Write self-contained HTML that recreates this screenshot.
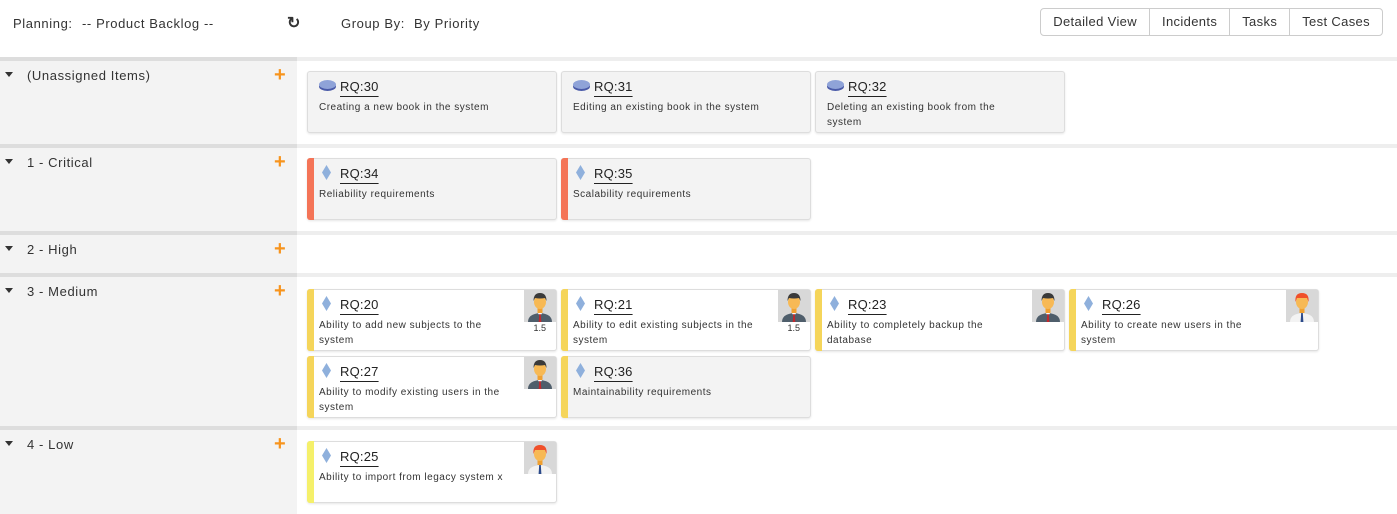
<!DOCTYPE html>
<html><head><style>
*{box-sizing:border-box;margin:0;padding:0}
body{width:1397px;height:514px;overflow:hidden;background:#fff;font-family:"Liberation Sans",sans-serif;color:#333;position:relative;letter-spacing:0.6px}
.top{position:absolute;top:0;left:0;width:1397px;height:57px}
.t{position:absolute;top:16px;font-size:13px}
.btns{position:absolute;right:14px;top:8px;height:28px;border:1px solid #ccc;border-radius:4px;display:flex;font-size:13px;letter-spacing:0.35px}
.btns div{padding:0 12px;line-height:26px;border-right:1px solid #ccc}
.btns div:last-child{border-right:0}
.sep{position:absolute;left:0;width:1397px;height:4px;background:#eee}
.sep:before{content:"";position:absolute;left:0;top:0;width:297px;height:4px;background:#ddd}
.row{position:absolute;left:0;width:1397px}
.lab{position:absolute;left:0;top:0;width:297px;height:100%;background:#f3f3f3}
.lab span{position:absolute;left:27px;top:7px;font-size:13px}
.lab i{position:absolute;left:5px;top:11px;border-left:4px solid transparent;border-right:4px solid transparent;border-top:5px solid #333}
.lab b{position:absolute;left:274px;top:6px;font-size:20px;color:#f7941d;font-weight:bold;line-height:16px;letter-spacing:0}
.card{position:absolute;width:250px;height:62px;border:1px solid #ddd;border-radius:3px;background:#f3f3f3;box-shadow:0 1px 2px rgba(0,0,0,.1)}
.card.w{background:#fff}
.card .bar{position:absolute;left:-1px;top:-1px;bottom:-1px;width:7px;border-radius:3px 0 0 3px}
.card .id{position:absolute;left:32px;top:7px;font-size:13px;letter-spacing:0.2px;text-decoration:underline;text-underline-offset:5px;color:#222}
.card .d{position:absolute;left:11px;top:28px;width:195px;font-size:10px;line-height:15px;color:#333;letter-spacing:0.5px}
.card.w .d{width:190px}
.dia{position:absolute;left:14px;top:6px;width:9px;height:15px}
.disk{position:absolute;left:11px;top:8px;width:17px;height:11px}
.av{position:absolute;right:0;top:0;width:32px;height:32px;background:#ddd;overflow:hidden}
.pts{position:absolute;right:10px;top:33px;font-size:9px;letter-spacing:0}
</style></head><body>
<div class="top">
<div class="t" style="left:13px">Planning:</div>
<div class="t" style="left:82px">-- Product Backlog --</div>
<div class="t" style="left:287px;font-size:16px;top:13px;font-weight:bold">&#x21bb;</div>
<div class="t" style="left:341px">Group By:</div>
<div class="t" style="left:414px">By Priority</div>
<div class="btns"><div>Detailed View</div><div>Incidents</div><div>Tasks</div><div>Test Cases</div></div>
</div>

<div class="sep" style="top:57px"></div>
<div class="row" style="top:61px;height:83px"><div class="lab"><i></i><span>(Unassigned Items)</span><b>+</b></div></div>
<div class="sep" style="top:144px"></div>
<div class="row" style="top:148px;height:83px"><div class="lab"><i></i><span>1 - Critical</span><b>+</b></div></div>
<div class="sep" style="top:231px"></div>
<div class="row" style="top:235px;height:38px"><div class="lab"><i></i><span>2 - High</span><b>+</b></div></div>
<div class="sep" style="top:273px"></div>
<div class="row" style="top:277px;height:149px"><div class="lab"><i></i><span>3 - Medium</span><b>+</b></div></div>
<div class="sep" style="top:426px"></div>
<div class="row" style="top:430px;height:84px"><div class="lab"><i></i><span>4 - Low</span><b>+</b></div></div>

<svg width="0" height="0" style="position:absolute"><defs>
<symbol id="dm" viewBox="0 0 9 15"><path d="M4.5 0L9 7.5 4.5 15 0 7.5z" fill="#8fb0dc"/></symbol>
<symbol id="dk" viewBox="0 0 17 11"><ellipse cx="8.5" cy="6.5" rx="8.5" ry="4.5" fill="#4a5aa8"/><ellipse cx="8.5" cy="4.5" rx="8.5" ry="4.5" fill="#8fa3d8"/></symbol>
<symbol id="m" viewBox="0 0 32 32"><rect width="32" height="32" fill="#d8d8d8"/><path d="M4 32q0-8 12-9 12 1 12 9z" fill="#4f5e6b"/><path d="M13 22h6l-3 4z" fill="#fff"/><path d="M15.3 24h1.4l.6 8h-2.6z" fill="#c0282d"/><rect x="13.5" y="17" width="5" height="6" fill="#f0a030"/><ellipse cx="16" cy="12" rx="6" ry="7" fill="#f7b955"/><path d="M9.5 11q0-8 6.5-8 6.5 0 6.5 8l-1.5-3q-5 1-10 0z" fill="#3a3a3a"/></symbol>
<symbol id="f" viewBox="0 0 32 32"><rect width="32" height="32" fill="#d8d8d8"/><path d="M4 32q0-8 12-9 12 1 12 9z" fill="#f3f3f3"/><path d="M15.2 23h1.6l.6 9h-2.8z" fill="#2c4a8a"/><rect x="13.5" y="17" width="5" height="6" fill="#f0a030"/><ellipse cx="16" cy="12" rx="6" ry="7" fill="#f7b955"/><path d="M9.5 12q-1-9 6.5-9 7.5 0 6.5 9l-1.5-4q-5 0-10 0z" fill="#f0502a"/></symbol>
</defs></svg>

<div class="card" style="left:307px;top:71px"><svg class="disk"><use href="#dk"/></svg><div class="id">RQ:30</div><div class="d">Creating a new book in the system</div></div>
<div class="card" style="left:561px;top:71px"><svg class="disk"><use href="#dk"/></svg><div class="id">RQ:31</div><div class="d">Editing an existing book in the system</div></div>
<div class="card" style="left:815px;top:71px"><svg class="disk"><use href="#dk"/></svg><div class="id">RQ:32</div><div class="d" style="width:185px">Deleting an existing book from the system</div></div>

<div class="card" style="left:307px;top:158px"><div class="bar" style="background:#f47457"></div><svg class="dia"><use href="#dm"/></svg><div class="id">RQ:34</div><div class="d">Reliability requirements</div></div>
<div class="card" style="left:561px;top:158px"><div class="bar" style="background:#f47457"></div><svg class="dia"><use href="#dm"/></svg><div class="id">RQ:35</div><div class="d">Scalability requirements</div></div>

<div class="card w" style="left:307px;top:289px"><div class="bar" style="background:#f5d55a"></div><svg class="dia"><use href="#dm"/></svg><div class="id">RQ:20</div><div class="d">Ability to add new subjects to the system</div><svg class="av"><use href="#m"/></svg><div class="pts">1.5</div></div>
<div class="card w" style="left:561px;top:289px"><div class="bar" style="background:#f5d55a"></div><svg class="dia"><use href="#dm"/></svg><div class="id">RQ:21</div><div class="d">Ability to edit existing subjects in the system</div><svg class="av"><use href="#m"/></svg><div class="pts">1.5</div></div>
<div class="card w" style="left:815px;top:289px"><div class="bar" style="background:#f5d55a"></div><svg class="dia"><use href="#dm"/></svg><div class="id">RQ:23</div><div class="d">Ability to completely backup the database</div><svg class="av"><use href="#m"/></svg></div>
<div class="card w" style="left:1069px;top:289px"><div class="bar" style="background:#f5d55a"></div><svg class="dia"><use href="#dm"/></svg><div class="id">RQ:26</div><div class="d">Ability to create new users in the system</div><svg class="av"><use href="#f"/></svg></div>
<div class="card w" style="left:307px;top:356px"><div class="bar" style="background:#f5d55a"></div><svg class="dia"><use href="#dm"/></svg><div class="id">RQ:27</div><div class="d">Ability to modify existing users in the system</div><svg class="av"><use href="#m"/></svg></div>
<div class="card" style="left:561px;top:356px"><div class="bar" style="background:#f5d55a"></div><svg class="dia"><use href="#dm"/></svg><div class="id">RQ:36</div><div class="d">Maintainability requirements</div></div>

<div class="card w" style="left:307px;top:441px"><div class="bar" style="background:#f5f06a"></div><svg class="dia"><use href="#dm"/></svg><div class="id">RQ:25</div><div class="d">Ability to import from legacy system x</div><svg class="av"><use href="#f"/></svg></div>
</body></html>
